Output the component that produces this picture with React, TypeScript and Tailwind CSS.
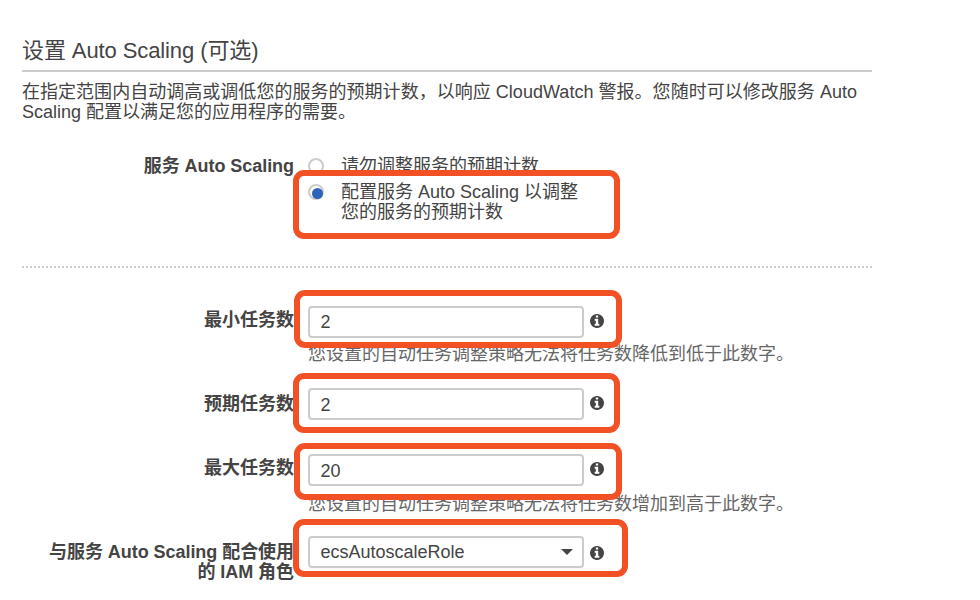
import type { ReactNode } from "react";

function Highlight({ className }: { className: string }) {
  return (
    <span
      className={
        "pointer-events-none absolute z-10 rounded-[11px] border-6 border-[#f25025] " + className
      }
    />
  );
}

function InfoIcon({ className }: { className: string }) {
  return (
    <svg className={"h-3.5 w-3.5 shrink-0 " + className} viewBox="0 0 1536 1536" fill="#444">
      <path d="M1024 1248v-160q0-14-9-23t-23-9h-96v-512q0-14-9-23t-23-9H544q-14 0-23 9t-9 23v160q0 14 9 23t23 9h96v320h-96q-14 0-23 9t-9 23v160q0 14 9 23t23 9h448q14 0 23-9t9-23zM896 352v-160q0-14-9-23t-23-9H672q-14 0-23 9t-9 23v160q0 14 9 23t23 9h192q14 0 23-9t9-23zM1536 768q0 209-103 385.500t-279.500 279.500t-385.500 103t-385.500-103t-279.500-279.500t-103-385.500t103-385.500t279.500-279.500t385.500-103t385.500 103t279.500 279.500t103 385.500z" />
    </svg>
  );
}

function Radio({ checked }: { checked?: boolean }) {
  return (
    <span className="mt-0.5 flex h-4 w-4 shrink-0 items-center justify-center rounded-full border-2 border-[#ccc] bg-white">
      {checked && <span className="ml-0.5 mt-0.5 h-[11px] w-[11px] shrink-0 rounded-full bg-[#2a65b8]" />}
    </span>
  );
}

function Label({ className, children }: { className: string; children: ReactNode }) {
  return <div className={"w-[272px] shrink-0 text-right font-bold " + className}>{children}</div>;
}

interface RowProps {
  label: ReactNode;
  value: string;
  rowClass: string;
  labelClass: string;
  valueClass: string;
  iconClass: string;
  highlight: string;
  hint?: string;
  hintClass?: string;
  select?: boolean;
}

function Row(p: RowProps) {
  return (
    <div className={"flex items-start " + p.rowClass}>
      <Label className={p.labelClass}>{p.label}</Label>
      <div className="relative ml-3.5">
        <Highlight className={p.highlight} />
        <div className="flex h-8 items-start gap-1.5">
          <div className="flex h-8 w-[276px] items-center justify-between rounded-[4px] border-2 border-[#ccc] pl-[10.5px] pr-[9px]">
            <span className={p.valueClass}>{p.value}</span>
            {p.select && (
              <span className="mb-px h-0 w-0 border-x-[6px] border-t-[6px] border-x-transparent border-t-[#444]" />
            )}
          </div>
          <InfoIcon className={p.iconClass} />
        </div>
        {p.hint && <p className={"whitespace-nowrap text-[#666] " + p.hintClass}>{p.hint}</p>}
      </div>
    </div>
  );
}

export default function App() {
  return (
    <main className="h-[600px] w-[980px] overflow-hidden bg-white pl-[22px] pt-9 font-['Liberation_Sans','Noto_Sans_CJK_SC',sans-serif] text-[18px] leading-5 text-[#444]">
      <div className="w-[850px]">
        <h2 className="h-9 border-b-2 border-[#ccc] text-[22px] leading-[30px] tracking-[-0.1px]">
          设置 Auto Scaling (可选)
        </h2>
        <p className="mt-2.5 whitespace-nowrap">
          <span className="tracking-[0.03px]">
            在指定范围内自动调高或调低您的服务的预期计数，以响应 CloudWatch 警报。您随时可以修改服务 Auto
          </span>
          <br />
          Scaling 配置以满足您的应用程序的需要。
        </p>

        <div className="mt-[34px] flex h-[112px] items-start border-b-2 border-dotted border-[#ccc]">
          <Label className="tracking-[-0.05px]">服务 Auto Scaling</Label>
          <div className="relative ml-3.5 flex flex-col gap-1.5">
            <Highlight className="left-[-15px] top-[14px] h-[69px] w-[327px]" />
            <div className="flex items-start gap-[17px]">
              <Radio />
              <span>请勿调整服务的预期计数</span>
            </div>
            <div className="flex items-start gap-[17px]">
              <Radio checked />
              <span className="whitespace-nowrap">
                配置服务 Auto Scaling 以调整
                <br />
                您的服务的预期计数
              </span>
            </div>
          </div>
        </div>

        <Row
          label="最小任务数"
          value="2"
          rowClass="mt-[38px] h-[82px]"
          labelClass="mt-1"
          valueClass=""
          iconClass="mt-2"
          highlight="left-[-14px] top-[-16px] h-[58px] w-[328px]"
          hint="您设置的自动任务调整策略无法将任务数降低到低于此数字。"
          hintClass="mt-1.5"
        />
        <Row
          label="预期任务数"
          value="2"
          rowClass="h-[66px]"
          labelClass="mt-1.5"
          valueClass="mt-0.5"
          iconClass="mt-2"
          highlight="left-[-15px] top-[-15px] h-[60px] w-[327px]"
        />
        <Row
          label="最大任务数"
          value="20"
          rowClass="h-[82px]"
          labelClass="mt-1"
          valueClass="mt-0.5"
          iconClass="mt-2"
          highlight="left-[-14px] top-[-11px] h-[57px] w-[328px]"
          hint="您设置的自动任务调整策略无法将任务数增加到高于此数字。"
          hintClass="mt-2"
        />
        <Row
          label={
            <>
              与服务 Auto Scaling 配合使用
              <br />的 IAM 角色
            </>
          }
          value="ecsAutoscaleRole"
          rowClass="h-16"
          labelClass="mt-1.5 tracking-[-0.05px]"
          valueClass=""
          iconClass="mt-[10px]"
          highlight="left-[-15px] top-[-17px] h-[58px] w-[335px]"
          select
        />
      </div>
    </main>
  );
}
